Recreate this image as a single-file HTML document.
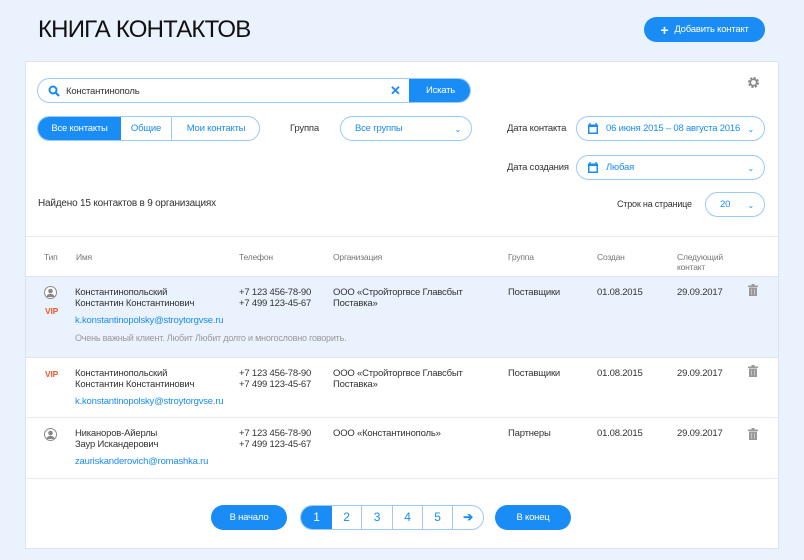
<!DOCTYPE html>
<html><head><meta charset="utf-8"><style>
*{box-sizing:border-box;margin:0;padding:0}
body{width:804px;height:560px;background:#eaf2fd;font-family:"Liberation Sans",sans-serif;position:relative;overflow:hidden;color:#333;letter-spacing:-0.2px}
.a{position:absolute;white-space:nowrap}
.btn{position:absolute;background:#1a8cf5;color:#fff;border-radius:14px;font-size:9.5px;display:flex;align-items:center;justify-content:center}
.sel{position:absolute;border:1px solid #9cc9f7;border-radius:14px;color:#1a8cf5;font-size:9.5px;display:flex;align-items:center;padding-left:14px;background:#fff}
.sel .ch{position:absolute;right:10px;top:8px;font-size:8px;color:#1a8cf5}
.s9{font-size:9.5px}
.h{font-size:8.5px;color:#777}
.lnk{color:#1a8cf5}
.vip{color:#f05a28;font-size:8.5px;font-weight:bold}
</style></head><body>
<div class="a" style="left:38px;top:16px;font-size:24px;color:#111;letter-spacing:-0.8px">КНИГА КОНТАКТОВ</div>
<div class="btn" style="left:644px;top:17px;width:121px;height:25px;border-radius:13px"><span style="font-size:14px;font-weight:bold;margin-right:6px">+</span>Добавить контакт</div>

<div class="a" style="left:25px;top:61px;width:754px;height:488px;background:#fff;border:1px solid #dde4ee"></div>

<!-- search -->
<div class="a" style="left:37px;top:78px;width:434px;height:25px;border:1px solid #9cc9f7;border-radius:13px;background:#fff;overflow:hidden">
<svg class="a" style="left:10px;top:6px" width="12" height="12" viewBox="0 0 12 12"><circle cx="5" cy="5" r="3.5" fill="none" stroke="#1a8cf5" stroke-width="2"/><path d="M7.5 7.5L11 11" stroke="#1a8cf5" stroke-width="2.2"/></svg>
<div class="a s9" style="left:28px;top:7px;color:#333">Константинополь</div>
<div class="a" style="left:352px;top:4px;color:#1a8cf5;font-size:13px;font-weight:bold">✕</div>
<div class="a" style="left:371px;top:0;width:63px;height:25px;background:#1a8cf5;color:#fff;font-size:9.5px;text-align:center;line-height:24px">Искать</div>
</div>
<svg class="a" style="left:747px;top:76px" width="13" height="13" viewBox="0 0 13 13"><circle cx="6.5" cy="6.5" r="4.2" fill="none" stroke="#888" stroke-width="2.6" stroke-dasharray="2 1.3"/><circle cx="6.5" cy="6.5" r="3.2" fill="none" stroke="#888" stroke-width="1.6"/></svg>

<!-- segmented -->
<div class="a" style="left:37px;top:116px;width:223px;height:25px;border:1px solid #9cc9f7;border-radius:13px;overflow:hidden;background:#fff;font-size:9.5px">
<div class="a" style="left:0;top:0;width:83px;height:23px;background:#1a8cf5;color:#fff;text-align:center;line-height:23px">Все контакты</div>
<div class="a" style="left:83px;top:0;width:51px;height:23px;border-right:1px solid #9cc9f7;color:#1a8cf5;text-align:center;line-height:23px">Общие</div>
<div class="a" style="left:134px;top:0;width:88px;height:23px;color:#1a8cf5;text-align:center;line-height:23px">Мои контакты</div>
</div>
<div class="a s9" style="left:290px;top:123px">Группа</div>
<div class="sel" style="left:340px;top:116px;width:132px;height:25px">Все группы<span class="ch">⌄</span></div>
<div class="a s9" style="left:507px;top:123px">Дата контакта</div>
<div class="sel" style="left:576px;top:116px;width:189px;height:25px;padding-left:29px"><svg class="a" style="left:11px;top:6px" width="10" height="11" viewBox="0 0 10 11"><rect x="0" y="1.5" width="10" height="9.5" fill="#1a8cf5"/><rect x="1.5" y="4" width="7" height="5.5" fill="#fff"/><path d="M2 0v3M8 0v3" stroke="#1a8cf5" stroke-width="1.4"/></svg>06 июня 2015 – 08 августа 2016<span class="ch">⌄</span></div>
<div class="a s9" style="left:507px;top:162px">Дата создания</div>
<div class="sel" style="left:576px;top:155px;width:189px;height:25px;padding-left:29px"><svg class="a" style="left:11px;top:6px" width="10" height="11" viewBox="0 0 10 11"><rect x="0" y="1.5" width="10" height="9.5" fill="#1a8cf5"/><rect x="1.5" y="4" width="7" height="5.5" fill="#fff"/><path d="M2 0v3M8 0v3" stroke="#1a8cf5" stroke-width="1.4"/></svg>Любая<span class="ch">⌄</span></div>
<div class="a" style="left:38px;top:198px;font-size:10px">Найдено 15 контактов в 9 организациях</div>
<div class="a" style="left:617px;top:199px;font-size:9px">Строк на странице</div>
<div class="sel" style="left:705px;top:192px;width:60px;height:25px">20<span class="ch">⌄</span></div>

<!-- table -->
<div class="a" style="left:26px;top:236px;width:752px;height:1px;background:#e6ebf2"></div>
<div class="a h" style="left:44px;top:252px">Тип</div>
<div class="a h" style="left:76px;top:252px">Имя</div>
<div class="a h" style="left:239px;top:252px">Телефон</div>
<div class="a h" style="left:333px;top:252px">Организация</div>
<div class="a h" style="left:508px;top:252px">Группа</div>
<div class="a h" style="left:597px;top:252px">Создан</div>
<div class="a h" style="left:677px;top:252px;line-height:10px">Следующий<br>контакт</div>

<div class="a" style="left:26px;top:276px;width:752px;height:82px;background:#eaf2fd;border-top:1px solid #dde6f0;border-bottom:1px solid #dde6f0"></div>
<div class="a" style="left:26px;top:417px;width:752px;height:1px;background:#e6ebf2"></div>
<div class="a" style="left:26px;top:478px;width:752px;height:1px;background:#e6ebf2"></div>

<!-- row1 -->
<svg class="a" style="left:44px;top:286px" width="13" height="13" viewBox="0 0 13 13"><circle cx="6.5" cy="6.5" r="6" fill="#fff" stroke="#888"/><circle cx="6.5" cy="5" r="2.3" fill="#888"/><path d="M2.5 11a4 3.3 0 0 1 8 0z" fill="#888"/></svg>
<div class="a vip" style="left:45px;top:306px">VIP</div>
<div class="a s9" style="left:75px;top:287px;line-height:11px">Константинопольский<br>Константин Константинович</div>
<div class="a s9 lnk" style="left:75px;top:315px">k.konstantinopolsky@stroytorgvse.ru</div>
<div class="a" style="left:75px;top:333px;font-size:9px;color:#999">Очень важный клиент. Любит Любит долго и многословно говорить.</div>
<div class="a s9" style="left:239px;top:287px;line-height:11px">+7 123 456-78-90<br>+7 499 123-45-67</div>
<div class="a s9" style="left:333px;top:287px;line-height:11px">ООО «Стройторгвсе Главсбыт<br>Поставка»</div>
<div class="a s9" style="left:508px;top:287px">Поставщики</div>
<div class="a s9" style="left:597px;top:287px">01.08.2015</div>
<div class="a s9" style="left:677px;top:287px">29.09.2017</div>

<!-- row2 -->
<div class="a vip" style="left:45px;top:369px">VIP</div>
<div class="a s9" style="left:75px;top:368px;line-height:11px">Константинопольский<br>Константин Константинович</div>
<div class="a s9 lnk" style="left:75px;top:396px">k.konstantinopolsky@stroytorgvse.ru</div>
<div class="a s9" style="left:239px;top:368px;line-height:11px">+7 123 456-78-90<br>+7 499 123-45-67</div>
<div class="a s9" style="left:333px;top:368px;line-height:11px">ООО «Стройторгвсе Главсбыт<br>Поставка»</div>
<div class="a s9" style="left:508px;top:368px">Поставщики</div>
<div class="a s9" style="left:597px;top:368px">01.08.2015</div>
<div class="a s9" style="left:677px;top:368px">29.09.2017</div>

<!-- row3 -->
<svg class="a" style="left:44px;top:428px" width="13" height="13" viewBox="0 0 13 13"><circle cx="6.5" cy="6.5" r="6" fill="#fff" stroke="#888"/><circle cx="6.5" cy="5" r="2.3" fill="#888"/><path d="M2.5 11a4 3.3 0 0 1 8 0z" fill="#888"/></svg>
<div class="a s9" style="left:75px;top:428px;line-height:11px">Никаноров-Айерлы<br>Заур Искандерович</div>
<div class="a s9 lnk" style="left:75px;top:456px">zauriskanderovich@romashka.ru</div>
<div class="a s9" style="left:239px;top:428px;line-height:11px">+7 123 456-78-90<br>+7 499 123-45-67</div>
<div class="a s9" style="left:333px;top:428px">ООО «Константинополь»</div>
<div class="a s9" style="left:508px;top:428px">Партнеры</div>
<div class="a s9" style="left:597px;top:428px">01.08.2015</div>
<div class="a s9" style="left:677px;top:428px">29.09.2017</div>

<!-- trash icons -->
<svg class="a" style="left:748px;top:284px" width="10" height="12" viewBox="0 0 10 12"><rect x="0" y="1.5" width="10" height="1.5" fill="#999"/><rect x="3.5" y="0" width="3" height="2" fill="#999"/><rect x="1" y="3.5" width="8" height="8.5" fill="#999"/><path d="M3.5 5v5.5M6.5 5v5.5" stroke="#ccc" stroke-width=".8"/></svg>
<svg class="a" style="left:748px;top:365px" width="10" height="12" viewBox="0 0 10 12"><rect x="0" y="1.5" width="10" height="1.5" fill="#999"/><rect x="3.5" y="0" width="3" height="2" fill="#999"/><rect x="1" y="3.5" width="8" height="8.5" fill="#999"/><path d="M3.5 5v5.5M6.5 5v5.5" stroke="#ccc" stroke-width=".8"/></svg>
<svg class="a" style="left:748px;top:428px" width="10" height="12" viewBox="0 0 10 12"><rect x="0" y="1.5" width="10" height="1.5" fill="#999"/><rect x="3.5" y="0" width="3" height="2" fill="#999"/><rect x="1" y="3.5" width="8" height="8.5" fill="#999"/><path d="M3.5 5v5.5M6.5 5v5.5" stroke="#ccc" stroke-width=".8"/></svg>

<!-- pagination -->
<div class="btn" style="left:211px;top:505px;width:76px;height:25px;border-radius:13px">В начало</div>
<div class="a" style="left:300px;top:505px;width:184px;height:25px;border:1px solid #9cc9f7;border-radius:13px;overflow:hidden;background:#fff;font-size:12px;color:#1a8cf5">
<div class="a" style="left:0;top:0;width:31px;height:23px;background:#1a8cf5;color:#fff;text-align:center;line-height:23px">1</div>
<div class="a" style="left:31px;top:0;width:30px;height:23px;border-right:1px solid #9cc9f7;text-align:center;line-height:23px">2</div>
<div class="a" style="left:61px;top:0;width:31px;height:23px;border-right:1px solid #9cc9f7;text-align:center;line-height:23px">3</div>
<div class="a" style="left:92px;top:0;width:30px;height:23px;border-right:1px solid #9cc9f7;text-align:center;line-height:23px">4</div>
<div class="a" style="left:122px;top:0;width:30px;height:23px;border-right:1px solid #9cc9f7;text-align:center;line-height:23px">5</div>
<div class="a" style="left:152px;top:0;width:30px;height:23px;text-align:center;line-height:22px;font-weight:bold">➔</div>
</div>
<div class="btn" style="left:495px;top:505px;width:76px;height:25px;border-radius:13px">В конец</div>
</body></html>
